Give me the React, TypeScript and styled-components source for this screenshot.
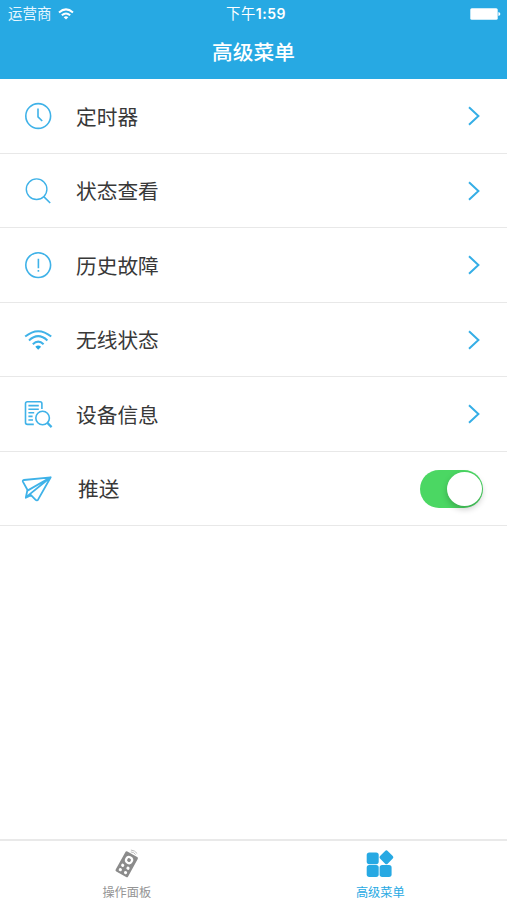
import React from 'react';
import styled, { createGlobalStyle } from 'styled-components';

const BLUE = '#27a9e3';

const GlobalStyle = createGlobalStyle`
  * { box-sizing: border-box; }
  body { margin: 0; background: #fff; }
`;

const Screen = styled.div`
  display: flex;
  flex-direction: column;
  width: 507px;
  height: 900px;
  overflow: hidden;
  background: #fff;
  color: #383838;
  font-family: Inter, 'Noto Sans CJK SC', sans-serif;
`;

const Header = styled.header`
  height: 79px;
  flex: none;
  background: ${BLUE};
  color: #fff;
`;

const StatusBar = styled.div`
  display: grid;
  grid-template-columns: 1fr auto 1fr;
  align-items: center;
  height: 27px;
  padding: 0 6px 0 8px;
`;

const Carrier = styled.div`
  display: flex;
  align-items: center;
  gap: 6px;
  font-size: 14.5px;
  line-height: 20px;
  color: #e6f7ff;
`;

const Clock = styled.div`
  font-size: 14.4px;
  font-weight: 400;
  line-height: 20px;
  letter-spacing: 0.5px;
  padding-left: 3px;
`;

const Digits = styled.span`
  font-size: 14px;
  font-weight: 600;
`;

const BatterySlot = styled.div`
  display: flex;
  justify-content: flex-end;
`;

const Title = styled.h1`
  margin: 11px 0 0;
  font-size: 20.7px;
  font-weight: 500;
  line-height: 30px;
  text-align: center;
`;

const Menu = styled.ul`
  display: grid;
  grid-template-rows: repeat(6, 74.45px);
  margin: 0;
  padding: 0.6px 0 0;
  list-style: none;
`;

const Row = styled.li`
  display: flex;
  align-items: center;
  padding: 0 24px 0 20px;
  border-bottom: 1px solid #e8e8e8;
`;

const Label = styled.span<{ $indent?: number }>`
  flex: 1;
  padding-top: 3px;
  padding-left: ${({ $indent = 20 }) => $indent}px;
  font-size: 20.7px;
  line-height: 30px;
`;

const IconSvg = styled.svg`
  display: block;
  flex: none;
  fill: none;
  stroke: #3fb2e8;
  stroke-width: 1.6;
`;

const Arrow = styled.svg`
  display: block;
  margin-right: 2px;
  fill: none;
  stroke: #35aee6;
  stroke-width: 2;
`;

const Toggle = styled.button`
  display: flex;
  justify-content: flex-end;
  width: 63px;
  height: 38px;
  padding: 2px 1px 2px 2px;
  border: 0;
  border-radius: 19px;
  background: #4bd763;
`;

const Knob = styled.span`
  width: 35px;
  height: 34px;
  border-radius: 50%;
  background: #fff;
  box-shadow: 0 3px 6px rgba(0, 0, 0, 0.22);
`;

const TabBar = styled.nav`
  display: grid;
  grid-template-columns: 1fr 1fr;
  height: 61px;
  margin-top: auto;
  border-top: 2px solid #e9e9e9;
`;

const Tab = styled.div<{ $active?: boolean }>`
  display: flex;
  flex-direction: column;
  align-items: center;
  padding-top: 7px;
  font-size: 12.2px;
  line-height: 18px;
  color: ${({ $active }) => ($active ? BLUE : '#949494')};
`;

const TabIcon = styled.svg`
  display: block;
  margin-bottom: 6px;
`;

const Icon = ({ children }: { children: React.ReactNode }) => (
  <IconSvg width="36" height="36" viewBox="0 0 36 36">{children}</IconSvg>
);

const ClockIcon = () => (
  <Icon>
    <circle cx="18.2" cy="18" r="12.4" />
    <path d="M18 10.5v8.3l4.2 4.2" />
  </Icon>
);

const SearchIcon = () => (
  <Icon>
    <circle cx="16.6" cy="16.2" r="10.3" strokeWidth="1.4" />
    <path d="M23.8 23.6l6.4 6.4" />
  </Icon>
);

const AlertIcon = () => (
  <Icon>
    <circle cx="18.2" cy="18.1" r="12.4" />
    <path d="M18.4 11.8v9.4M18.4 23v1.8" />
  </Icon>
);

const WifiIcon = () => (
  <Icon>
    <path d="M5.2 14.6Q18.2 3.8 31.2 14.6M9 18.4Q18.2 9.8 27.4 18.4M12.8 22.2Q18.2 17 23.6 22.2" strokeWidth="2" />
    <path d="M15.3 24.8Q18.2 22.4 21.1 24.8L18.2 27.8z" fill={BLUE} stroke="none" />
  </Icon>
);

const DeviceIcon = () => (
  <Icon>
    <path d="M13.8 28.4H7.4Q5.5 28.4 5.5 26.5V7.6Q5.5 5.7 7.4 5.7H20Q21.9 5.7 21.9 7.6V13" />
    <path d="M8.4 9.6h10.4M8.4 13.2h10.4M8.4 16.8h5.8M8.4 20.4h4.2M8.4 24h4.6" />
    <circle cx="22.6" cy="22" r="6.8" />
    <path d="M27.4 26.9l4.2 4.2" strokeWidth="2.2" />
  </Icon>
);

const PlaneIcon = () => (
  <Icon>
    <path
      d="M30.7 6.3L4 9Q2.2 9.3 3 10.9L7.1 18.2Q7.5 19 7.2 20L5.8 26.8L11 24.2L15.4 28.7Q17 30.2 18.2 28.4zM30.7 6.3L7.5 19.6M30.7 6.3L5.8 26.4"
      strokeWidth="1.8"
      strokeLinejoin="round"
    />
  </Icon>
);

const SignalIcon = () => (
  <svg width="16" height="12" viewBox="0 0 16 12" fill="none" stroke="#fff" strokeWidth="2">
    <path d="M1 4.4Q8-1.6 15 4.4M3.8 7.3Q8 3.6 12.2 7.3" />
    <path d="M5.7 9.2Q8 7.2 10.3 9.2L8 11.6z" fill="#fff" stroke="none" />
  </svg>
);

const BatteryIcon = () => (
  <svg width="31" height="12" viewBox="0 0 31 12" fill="#fff">
    <rect x="0.3" y="0.3" width="27.4" height="11.5" rx="1.5" />
    <path d="M28.4 4Q30.4 4.4 30.4 6T28.4 8z" />
  </svg>
);

const items = [
  { label: '定时器', icon: ClockIcon },
  { label: '状态查看', icon: SearchIcon },
  { label: '历史故障', icon: AlertIcon },
  { label: '无线状态', icon: WifiIcon },
  { label: '设备信息', icon: DeviceIcon },
];

export default function App() {
  return (
    <Screen>
      <GlobalStyle />
      <Header>
        <StatusBar>
          <Carrier>运营商<SignalIcon /></Carrier>
          <Clock>下午<Digits>1:59</Digits></Clock>
          <BatterySlot><BatteryIcon /></BatterySlot>
        </StatusBar>
        <Title>高级菜单</Title>
      </Header>
      <Menu>
        {items.map(({ label, icon: Glyph }) => (
          <Row key={label}>
            <Glyph />
            <Label>{label}</Label>
            <Arrow width="14" height="20" viewBox="0 0 14 20">
              <path d="M2 1.3L11.4 10L2 18.7" />
            </Arrow>
          </Row>
        ))}
        <Row>
          <PlaneIcon />
          <Label $indent={22}>推送</Label>
          <Toggle role="switch" aria-checked="true"><Knob /></Toggle>
        </Row>
      </Menu>
      <TabBar>
        <Tab>
          <TabIcon width="30" height="30" viewBox="0 0 30 30">
            <g transform="rotate(29 15 16)">
              <rect x="7.8" y="5" width="14.2" height="22.8" rx="1.5" fill="#8b8b8b" />
              <circle cx="14.9" cy="11.6" r="3" fill="#8b8b8b" stroke="#fff" strokeWidth="2.2" />
              <g fill="#fff">
                <circle cx="11.9" cy="19.2" r="1.6" />
                <circle cx="17.9" cy="19.2" r="1.6" />
                <circle cx="11.9" cy="24.2" r="1.6" />
                <circle cx="17.9" cy="24.2" r="1.6" />
              </g>
              <path d="M12.4 3.6Q15.2 2.2 18 3.6M11.6 1.9Q15.2 0.2 18.8 1.9" fill="none" stroke="#b5b5b5" strokeWidth="0.8" />
            </g>
          </TabIcon>
          操作面板
        </Tab>
        <Tab $active>
          <TabIcon width="30" height="30" viewBox="0 0 30 30" fill={BLUE}>
            <rect x="1.7" y="4.4" width="12" height="11.8" rx="2.6" />
            <rect x="1.7" y="17.1" width="12" height="11.8" rx="2.6" />
            <rect x="14.6" y="17.1" width="12" height="11.8" rx="2.6" />
            <rect x="16" y="3.9" width="10.8" height="10.8" rx="1.8" transform="rotate(45 21.4 9.3)" />
          </TabIcon>
          高级菜单
        </Tab>
      </TabBar>
    </Screen>
  );
}
